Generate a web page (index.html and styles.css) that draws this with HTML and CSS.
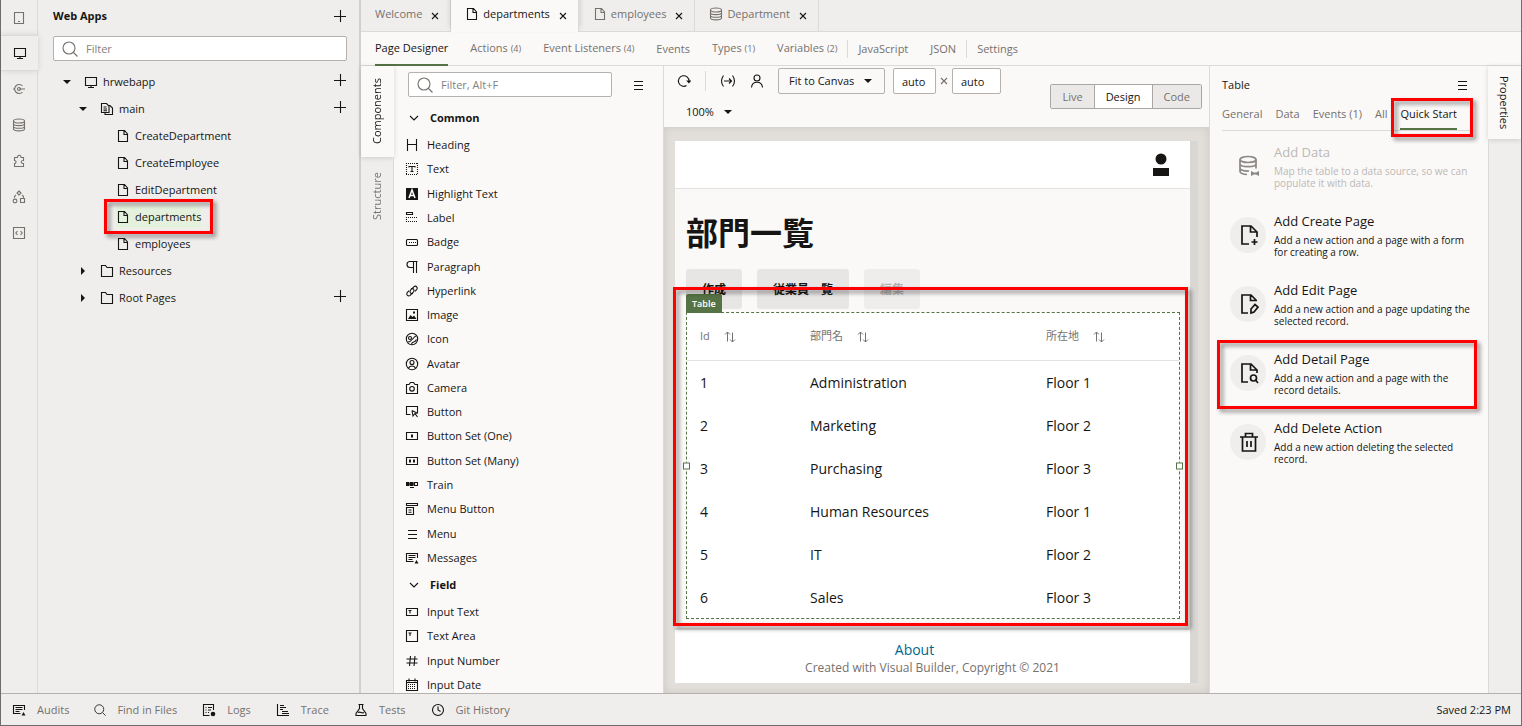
FILE: index.html
```html
<!DOCTYPE html>
<html lang="en">
<head>
<meta charset="utf-8">
<title>Visual Builder - departments</title>
<link rel="stylesheet" href="styles.css">
</head>
<body>
<svg class="sprite" aria-hidden="true">
  <symbol id="plus" viewBox="0 0 14 14"><path d="M7.500 1v12M1 7.500h12"/></symbol>
  <symbol id="search" viewBox="0 0 16 16"><circle cx="7" cy="7" r="6"/><path d="M11.500 11.500L15.500 15.500"/></symbol>
  <symbol id="mobile" viewBox="0 0 14 14"><path d="M2.500 1.500h9v11h-9zM6 10.500h2"/></symbol>
  <symbol id="desktop" viewBox="0 0 14 14"><path d="M1.500 2.500h11v8h-11zM7 10.500v2M4 12.500h6"/></symbol>
  <symbol id="service" viewBox="0 0 14 14"><path d="M10.500 4A4.500 4.500 0 1 0 10.500 10M1 7h2M7 7h6"/><circle cx="7" cy="7" r="1.500"/></symbol>
  <symbol id="data" viewBox="0 0 14 14"><ellipse cx="7" cy="3" rx="5.500" ry="2"/><path d="M1.500 3v8c0 2.500 11 2.500 11 0V3M1.500 5.700c0 2.500 11 2.500 11 0M1.500 8.400c0 2.500 11 2.500 11 0"/></symbol>
  <symbol id="puzzle" viewBox="0 0 14 14"><path d="M2.500 3.500h3c-.5-3 4-3 3.500 0h2.500v3c-3-.5-3 3.500 0 3v3h-9v-3c2 .3 2-3.300 0-3z"/></symbol>
  <symbol id="process" viewBox="0 0 14 14"><path d="M7 1l2 2-2 2-2-2zM8.500 8.500h4v4h-4zM4 5C2.500 6 2 7 2.500 8M10 5c1.500 1 2 2 1.500 3"/><circle cx="3" cy="11" r="1.900"/></symbol>
  <symbol id="code" viewBox="0 0 14 14"><path d="M1.500 1.500h11v11h-11zM5.500 5L3.800 7l1.700 2M8.500 5l1.700 2-1.700 2"/></symbol>
  <symbol id="page" viewBox="0 0 14 14"><path d="M2.500 1.500h6L11.500 5v7.500h-9zM8 1.500V5.500h3.500"/></symbol>
  <symbol id="flow" viewBox="0 0 14 14"><path d="M1.500 1.500h5L9 4v6.500H1.500zM9 3.500h1L12.500 6v6.500H5v-2M3.500 5h3M3.500 7h3.500M3.500 8.700h3.500"/></symbol>
  <symbol id="folder" viewBox="0 0 14 14"><path d="M1.500 1.500h4l1.500 2h5.500v9h-11z"/></symbol>
  <symbol id="down" viewBox="0 0 8 8"><path class="solid" d="M0 2h8L4 6z"/></symbol>
  <symbol id="right" viewBox="0 0 8 8"><path class="solid" d="M2 0v8l4-4z"/></symbol>
  <symbol id="close" viewBox="0 0 8 8"><path d="M1 1l6 6M7 1L1 7"/></symbol>
  <symbol id="menu" viewBox="0 0 14 14"><path d="M3 3.500h9M3 7.500h9M3 11.500h9"/></symbol>
  <symbol id="chevron" viewBox="0 0 10 10"><path d="M1 3l4 4 4-4"/></symbol>
  <symbol id="refresh" viewBox="0 0 14 14"><path d="M9.500 11.500A5.300 5.300 0 1 1 12 7"/><path class="solid" d="M9.200 6.500h5.300L11.900 9.600z"/></symbol>
  <symbol id="params" viewBox="0 0 16 14"><path d="M3.500 1.500Q-.500 7 3.500 12.500M12.500 1.500Q16.500 7 12.500 12.500M4 7h7.500M9 4.500L11.500 7 9 9.500"/></symbol>
  <symbol id="person" viewBox="0 0 14 14"><circle cx="7" cy="4" r="3"/><path d="M1.500 13.500C2 6.500 12 6.500 12.500 13.500"/></symbol>
  <symbol id="user" viewBox="0 0 18 24"><circle class="solid" cx="9" cy="6" r="5.500"/><path class="solid" d="M1 15h16v8H1z"/></symbol>
  <symbol id="sort" viewBox="0 0 12 12"><path d="M3.500 10.500V1M1 3.500L3.500 1 6 3.500M8.500 1.500V11M6 8.500L8.500 11 11 8.500"/></symbol>
  <symbol id="heading" viewBox="0 0 14 14"><path d="M2.500 1v12M11.500 1v12M2.500 6.500h9"/></symbol>
  <symbol id="text" viewBox="0 0 14 14"><path class="dots" d="M1 1.500h12M1 12.500h12M1.500 1v12M12.500 1v12"/><path d="M4 5.500V4.500h6v1M7 4v6M5.500 9.500h3"/></symbol>
  <symbol id="highlight" viewBox="0 0 14 14"><path class="solid" d="M1 1h12v12H1z"/><path class="light" d="M4 11l3-8 3 8M5 8.500h4"/></symbol>
  <symbol id="label" viewBox="0 0 14 14"><path d="M1.500 1.500h6v2h-6z"/><path class="dots" d="M1 6.500h12M1 10.500h12M1.500 6v5"/></symbol>
  <symbol id="badge" viewBox="0 0 14 14"><rect x="1.500" y="4.500" width="11" height="6" rx="1"/><path class="dots" d="M4 7.500h7"/></symbol>
  <symbol id="paragraph" viewBox="0 0 14 14"><path d="M12.500 1.500H5a3 3 0 0 0 0 6h3M8.500 1.500V13M11.500 1.500V13"/></symbol>
  <symbol id="link" viewBox="0 0 14 14"><path d="M8 9.500C6 10.500 4 8 5.500 6.200L8.800 2.800c2-1.700 4.500.7 3 2.600L10 7.400M6 4.700C8 3.500 10 6 8.500 7.900L5.200 11.300c-2 1.700-4.500-.7-3-2.600L4 6.700"/></symbol>
  <symbol id="image" viewBox="0 0 14 14"><path d="M1.500 1.500h11v11h-11z"/><path class="solid" d="M3 11l2.500-4 2 2L9 7.500l2.500 3.500zM8 3.500h2v2H8z"/></symbol>
  <symbol id="icon" viewBox="0 0 14 14"><circle cx="7" cy="7" r="5.700"/><circle cx="5" cy="6" r="1.500"/><path d="M3 10c4 0 5-5 8-6M6.500 12.500c0-4 4-1 5-5"/></symbol>
  <symbol id="avatar" viewBox="0 0 14 14"><circle cx="7" cy="7" r="5.700"/><circle cx="7" cy="5.500" r="2"/><path d="M3.500 11.300c1-3 6-3 7 0"/></symbol>
  <symbol id="camera" viewBox="0 0 14 14"><path d="M1.500 3.500H4L5.500 1.500h3L10 3.500h2.500v9h-11z"/><circle cx="7" cy="7.800" r="2.300"/></symbol>
  <symbol id="button" viewBox="0 0 14 14"><path d="M5.500 9.500h-4v-8h11v7M7 5.500l5 2.500-2 .5 2.500 3.500M7 5.500l1 5.500 1.500-2"/></symbol>
  <symbol id="one" viewBox="0 0 14 14"><path d="M1.500 3.500h11v7h-11z"/><path class="solid" d="M6 5.500h2v3H6z"/></symbol>
  <symbol id="many" viewBox="0 0 14 14"><path d="M1.500 3.500h11v7h-11z"/><path class="solid" d="M4 5.500h2v3H4zM8 5.500h2v3H8z"/></symbol>
  <symbol id="train" viewBox="0 0 14 14"><path class="solid" d="M1 4h3.500v4H1zM5 4h3.500v4H5zM4 5.500h6v1H4zM5 9h4v1H5z"/><path d="M9.500 4.500h3v3h-3z"/></symbol>
  <symbol id="menubutton" viewBox="0 0 14 14"><path d="M1.500 1.500h11v2h-11zM1.500 5.500h7v7h-7zM3.500 8h3M3.500 10.300h3"/></symbol>
  <symbol id="messages" viewBox="0 0 14 14"><path d="M12.500 7V2.500h-11v8h7M3.500 4.500h7M3.500 6.500h7M3.500 8.500h4"/><path class="solid" d="M11.500 9l2 3.500H9.500z"/></symbol>
  <symbol id="inputtext" viewBox="0 0 14 14"><path d="M1.500 3.500h11v7h-11zM3.500 5.500h3M5 5.500v3"/></symbol>
  <symbol id="textarea" viewBox="0 0 14 14"><path d="M1.500 1.500h11v11h-11zM3.500 4h3M5 4v3"/></symbol>
  <symbol id="number" viewBox="0 0 14 14"><path d="M5.500 2l-1 10M10 2L9 12M1.500 5h11M1.500 9h11"/></symbol>
  <symbol id="calendar" viewBox="0 0 14 14"><path d="M1.500 2.500h11v10h-11zM1.500 4.500h11M4 .500v3M10 .500v3"/><path class="dots" d="M3 6.500h8M3 8.500h8M3 10.500h8"/></symbol>
  <symbol id="logs" viewBox="0 0 14 14"><path d="M7.500 12.500h-6v-11h10V7M3.500 4.500h1M6 4.500h4M3.500 7h1M6 7h3M3.500 9.500h1M6 9.500h1"/><circle class="solid" cx="11" cy="11" r="2.300"/></symbol>
  <symbol id="trace" viewBox="0 0 14 14"><path d="M1.500 1v11.500H13M4 2.500h4M4 4.500h6M4 6.500h3M6 8.500h6M6 10.500h7"/></symbol>
  <symbol id="tests" viewBox="0 0 14 14"><path d="M4.500 1.500h5M5.500 1.500v4L2 10.500v2h10v-2L8.500 5.500v-4M4 9.500c2-1.500 4 1.500 6 0"/></symbol>
  <symbol id="clock" viewBox="0 0 14 14"><circle cx="7" cy="7" r="5.500"/><path d="M7 3.500V7l2.500 1.500"/></symbol>
  <symbol id="adddata" viewBox="0 0 22 22"><ellipse cx="10" cy="4.500" rx="8" ry="3"/><path d="M2 4.500v12c0 1.500 3 3 7 3M18 4.500v9M2 9c0 3.500 16 3.500 16 0M2 13c0 2.500 5 3.200 9 3"/><path class="solid" d="M13 16l3 1.500h2l3-1.500v5l-3-1.500h-2L13 21z"/></symbol>
  <symbol id="addpage" viewBox="0 0 22 22"><path d="M11 20H4V2h9l6 6v5M12.500 2v6H19M13.500 18h6M16.500 15v6"/></symbol>
  <symbol id="editpage" viewBox="0 0 22 22"><path d="M10 20H4V2h9l5 5M12.500 2v5.500H19M13 16l4-4.500 3 2.500-4 5-3 1z"/></symbol>
  <symbol id="detailpage" viewBox="0 0 22 22"><path d="M10 20H4V2h9l6 6v3M12.500 2v6H19M17.500 18L20 21"/><circle cx="15.500" cy="16" r="3"/></symbol>
  <symbol id="trash" viewBox="0 0 22 22"><path d="M2 6h18M7.500 6V2.500h7V6M4.500 6v14h13V6M9 10v6M13 10v6"/></symbol>
</svg>

<div class="app">
  <div class="workspace">
    <nav class="rail" aria-label="Artifacts">
      <button class="rail-item" aria-label="Mobile Apps"><svg class="i14"><use href="#mobile"/></svg></button>
      <button class="rail-item current" aria-label="Web Apps"><svg class="i14"><use href="#desktop"/></svg></button>
      <button class="rail-item" aria-label="Services"><svg class="i14"><use href="#service"/></svg></button>
      <button class="rail-item" aria-label="Business Objects"><svg class="i14"><use href="#data"/></svg></button>
      <button class="rail-item" aria-label="Components"><svg class="i14"><use href="#puzzle"/></svg></button>
      <button class="rail-item" aria-label="Processes"><svg class="i14"><use href="#process"/></svg></button>
      <button class="rail-item" aria-label="Source"><svg class="i14"><use href="#code"/></svg></button>
    </nav>

    <aside class="navigator">
      <header class="nav-head"><h2>Web Apps</h2><button class="add" aria-label="Add web app"><svg class="i14"><use href="#plus"/></svg></button></header>
      <label class="filter"><svg class="i16"><use href="#search"/></svg><input type="text" placeholder="Filter" aria-label="Filter"></label>
      <ul class="tree">
        <li class="l1"><svg class="i8"><use href="#down"/></svg><svg class="i14"><use href="#desktop"/></svg><span>hrwebapp</span><button class="add" aria-label="Add to hrwebapp"><svg class="i14"><use href="#plus"/></svg></button></li>
        <li class="l2"><svg class="i8"><use href="#down"/></svg><svg class="i14"><use href="#flow"/></svg><span>main</span><button class="add" aria-label="Add to main"><svg class="i14"><use href="#plus"/></svg></button></li>
        <li class="l3"><svg class="i14"><use href="#page"/></svg><span>CreateDepartment</span></li>
        <li class="l3"><svg class="i14"><use href="#page"/></svg><span>CreateEmployee</span></li>
        <li class="l3"><svg class="i14"><use href="#page"/></svg><span>EditDepartment</span></li>
        <li class="l3 selected"><div class="node marked"><svg class="i14"><use href="#page"/></svg><span>departments</span></div></li>
        <li class="l3"><svg class="i14"><use href="#page"/></svg><span>employees</span></li>
        <li class="l2"><svg class="i8"><use href="#right"/></svg><svg class="i14"><use href="#folder"/></svg><span>Resources</span></li>
        <li class="l2"><svg class="i8"><use href="#right"/></svg><svg class="i14"><use href="#folder"/></svg><span>Root Pages</span><button class="add" aria-label="Add root page"><svg class="i14"><use href="#plus"/></svg></button></li>
      </ul>
    </aside>

    <main class="editor">
      <div class="doc-tabs">
        <div class="doc-tab"><span>Welcome</span><button class="close" aria-label="Close Welcome"><svg class="i8"><use href="#close"/></svg></button></div>
        <div class="doc-tab current"><svg class="i14"><use href="#page"/></svg><span>departments</span><button class="close" aria-label="Close departments"><svg class="i8"><use href="#close"/></svg></button></div>
        <div class="doc-tab"><svg class="i14"><use href="#page"/></svg><span>employees</span><button class="close" aria-label="Close employees"><svg class="i8"><use href="#close"/></svg></button></div>
        <div class="doc-tab"><svg class="i14"><use href="#data"/></svg><span>Department</span><button class="close" aria-label="Close Department"><svg class="i8"><use href="#close"/></svg></button></div>
      </div>
      <nav class="views">
        <a class="current" href="#">Page Designer</a>
        <a href="#">Actions <small>(4)</small></a>
        <a href="#">Event Listeners <small>(4)</small></a>
        <a href="#">Events</a>
        <a href="#">Types <small>(1)</small></a>
        <a href="#">Variables <small>(2)</small></a>
        <a class="ruled" href="#">JavaScript</a>
        <a href="#">JSON</a>
        <a class="ruled" href="#">Settings</a>
      </nav>

      <div class="designer">
        <div class="side-tabs">
          <button class="current">Components</button>
          <button>Structure</button>
        </div>

        <section class="palette">
          <div class="palette-head">
            <label class="filter"><svg class="i16"><use href="#search"/></svg><input type="text" placeholder="Filter, Alt+F" aria-label="Filter components"></label>
            <button class="plain" aria-label="Palette menu"><svg class="i14"><use href="#menu"/></svg></button>
          </div>
          <h3><svg class="i10"><use href="#chevron"/></svg>Common</h3>
          <ul class="components common">
            <li><svg class="i14"><use href="#heading"/></svg>Heading</li>
            <li><svg class="i14"><use href="#text"/></svg>Text</li>
            <li><svg class="i14"><use href="#highlight"/></svg>Highlight Text</li>
            <li><svg class="i14"><use href="#label"/></svg>Label</li>
            <li><svg class="i14"><use href="#badge"/></svg>Badge</li>
            <li><svg class="i14"><use href="#paragraph"/></svg>Paragraph</li>
            <li><svg class="i14"><use href="#link"/></svg>Hyperlink</li>
            <li><svg class="i14"><use href="#image"/></svg>Image</li>
            <li><svg class="i14"><use href="#icon"/></svg>Icon</li>
            <li><svg class="i14"><use href="#avatar"/></svg>Avatar</li>
            <li><svg class="i14"><use href="#camera"/></svg>Camera</li>
            <li><svg class="i14"><use href="#button"/></svg>Button</li>
            <li><svg class="i14"><use href="#one"/></svg>Button Set (One)</li>
            <li><svg class="i14"><use href="#many"/></svg>Button Set (Many)</li>
            <li><svg class="i14"><use href="#train"/></svg>Train</li>
            <li><svg class="i14"><use href="#menubutton"/></svg>Menu Button</li>
            <li><svg class="i14"><use href="#menu"/></svg>Menu</li>
            <li><svg class="i14"><use href="#messages"/></svg>Messages</li>
          </ul>
          <h3><svg class="i10"><use href="#chevron"/></svg>Field</h3>
          <ul class="components">
            <li><svg class="i14"><use href="#inputtext"/></svg>Input Text</li>
            <li><svg class="i14"><use href="#textarea"/></svg>Text Area</li>
            <li><svg class="i14"><use href="#number"/></svg>Input Number</li>
            <li><svg class="i14"><use href="#calendar"/></svg>Input Date</li>
          </ul>
        </section>

        <section class="stage">
          <div class="toolbar">
            <div class="tools">
              <div class="tool-row">
                <button class="plain" aria-label="Reload"><svg class="i14"><use href="#refresh"/></svg></button>
                <span class="divider"></span>
                <button class="plain" aria-label="Parameters"><svg class="i16"><use href="#params"/></svg></button>
                <button class="plain" aria-label="Authentication"><svg class="i14"><use href="#person"/></svg></button>
                <span class="picker boxed"><select aria-label="Canvas size"><option>Fit to Canvas</option></select><svg class="i8"><use href="#down"/></svg></span>
                <span class="dims"><input class="width" type="text" value="auto" aria-label="Width"><svg class="i8"><use href="#close"/></svg><input class="height" type="text" value="auto" aria-label="Height"></span>
              </div>
              <span class="picker zoom"><select aria-label="Zoom"><option>100%</option></select><svg class="i8"><use href="#down"/></svg></span>
            </div>
            <div class="modes"><button>Live</button><button class="current">Design</button><button>Code</button></div>
          </div>

          <div class="canvas">
            <div class="preview" lang="ja">
              <header class="app-bar"><svg class="avatar"><use href="#user"/></svg></header>
              <div class="app-body">
                <h1>部門一覧</h1>
                <div class="actions"><button>作成</button><button>従業員一覧</button><button disabled>編集</button></div>
                <div class="table-box marked">
                  <span class="tag">Table</span>
                  <table>
                    <colgroup><col class="c-id"><col class="c-name"><col></colgroup>
                    <thead><tr><th>Id<svg class="i12"><use href="#sort"/></svg></th><th>部門名<svg class="i12"><use href="#sort"/></svg></th><th>所在地<svg class="i12"><use href="#sort"/></svg></th></tr></thead>
                    <tbody>
                      <tr><td>1</td><td>Administration</td><td>Floor 1</td></tr>
                      <tr><td>2</td><td>Marketing</td><td>Floor 2</td></tr>
                      <tr><td>3</td><td>Purchasing</td><td>Floor 3</td></tr>
                      <tr><td>4</td><td>Human Resources</td><td>Floor 1</td></tr>
                      <tr><td>5</td><td>IT</td><td>Floor 2</td></tr>
                      <tr><td>6</td><td>Sales</td><td>Floor 3</td></tr>
                    </tbody>
                  </table>
                  <i class="handle west"></i><i class="handle east"></i>
                </div>
              </div>
              <footer class="app-foot"><a href="#">About</a><p>Created with Visual Builder, Copyright © 2021</p></footer>
            </div>
          </div>
        </section>

        <aside class="properties">
          <header class="prop-head"><h2>Table</h2><button class="plain" aria-label="Properties menu"><svg class="i14"><use href="#menu"/></svg></button></header>
          <nav class="prop-tabs"><a href="#">General</a><a href="#">Data</a><a href="#">Events (1)</a><a href="#">All</a><a class="current marked" href="#">Quick Start</a></nav>
          <div class="starts">
            <button class="start" disabled><span class="disc"><svg><use href="#adddata"/></svg></span><span class="copy"><b>Add Data</b><span>Map the table to a data source, so we can populate it with data.</span></span></button>
            <button class="start"><span class="disc"><svg><use href="#addpage"/></svg></span><span class="copy"><b>Add Create Page</b><span>Add a new action and a page with a form for creating a row.</span></span></button>
            <button class="start"><span class="disc"><svg><use href="#editpage"/></svg></span><span class="copy"><b>Add Edit Page</b><span>Add a new action and a page updating the selected record.</span></span></button>
            <button class="start marked"><span class="disc"><svg><use href="#detailpage"/></svg></span><span class="copy"><b>Add Detail Page</b><span>Add a new action and a page with the record details.</span></span></button>
            <button class="start"><span class="disc"><svg><use href="#trash"/></svg></span><span class="copy"><b>Add Delete Action</b><span>Add a new action deleting the selected record.</span></span></button>
          </div>
        </aside>
        <div class="side-tabs right"><button class="current">Properties</button></div>
      </div>
    </main>
  </div>

  <footer class="status">
    <button><svg class="i14"><use href="#messages"/></svg>Audits</button>
    <button><svg class="i12"><use href="#search"/></svg>Find in Files</button>
    <button><svg class="i14"><use href="#logs"/></svg>Logs</button>
    <button><svg class="i14"><use href="#trace"/></svg>Trace</button>
    <button><svg class="i14"><use href="#tests"/></svg>Tests</button>
    <button><svg class="i14"><use href="#clock"/></svg>Git History</button>
    <span class="saved">Saved 2:23 PM</span>
  </footer>
</div>
</body>
</html>
```

FILE: styles.css
```css
:root {
  --ink: #161513;
  --muted: #75716d;
  --ground: #f0eeec;
  --paper: #fbf9f8;
  --line: #dcdad8;
  --edge: #b4b1ae;
  --green: #557344;
}

* { box-sizing: border-box; }

body {
  margin: 0;
  background: var(--ground);
  color: var(--ink);
  font: 11px/16px "Open Sans", "Noto Sans CJK JP", sans-serif;
}

h1, h2, h3, p, ul { margin: 0; padding: 0; }
ul { list-style: none; }
a { color: inherit; text-decoration: none; }

button, input, select {
  margin: 0;
  padding: 0;
  border: 0;
  background: none;
  color: inherit;
  font: inherit;
}

input { min-width: 0; outline: 0; }
input::placeholder { color: #85817d; opacity: 1; }
select { appearance: none; }

svg {
  flex: none;
  fill: none;
  stroke: currentColor;
  stroke-width: 1.1;
}

.sprite { display: none; }
.solid { fill: currentColor; stroke: none; }
.light { stroke: #fff; stroke-width: 1.5; }
.dots { stroke-dasharray: 1 1; }
.i8 { width: 8px; height: 8px; }
.i10 { width: 10px; height: 10px; }
.i12 { width: 12px; height: 12px; }
.i14 { width: 14px; height: 14px; }
.i16 { width: 16px; height: 16px; }

.app {
  display: flex;
  flex-direction: column;
  height: 100vh;
  border: 1px solid #6f6d6b;
  border-top: 0;
}

.workspace { display: flex; flex: 1; min-height: 0; }

/* Red callout frame */
.marked { position: relative; }
.marked::after {
  content: "";
  position: absolute;
  z-index: 2;
  border: 3px solid #f00;
  filter: drop-shadow(3px 3px 2px rgba(0, 0, 0, .45));
  pointer-events: none;
}

/* Artifact rail */
.rail {
  display: flex;
  flex-direction: column;
  width: 37px;
  border-right: 1px solid var(--line);
}

.rail-item {
  display: grid;
  place-items: center;
  height: 36px;
  color: var(--muted);
}

.rail-item:first-child { height: 35px; }

.rail-item.current {
  margin-right: -1px;
  border: solid var(--line);
  border-width: 1px 0;
  background: var(--ground);
  box-shadow: 0 0 6px rgba(0, 0, 0, .12);
  color: var(--ink);
}

/* Navigator */
.navigator {
  width: 323px;
  padding: 0 12px 0 15px;
  border-right: 2px solid #d2d0ce;
}

.nav-head {
  display: flex;
  align-items: center;
  justify-content: space-between;
  height: 32px;
  padding-bottom: 1px;
}

.nav-head h2 { font-size: 11px; }
.add { display: flex; }

.filter {
  display: flex;
  align-items: center;
  gap: 8px;
  height: 25px;
  padding: 0 8px;
  border: 1px solid var(--edge);
  border-radius: 2px;
  background: #fff;
  color: var(--muted);
}

.navigator .filter { margin: 4px 0 7px; }
.filter input { flex: 1; }

.tree li {
  display: flex;
  align-items: center;
  height: 27px;
}

.tree .add { margin-left: auto; padding-bottom: 4px; }
.tree span { margin-left: 5px; }
.l1 { padding-left: 10px; }
.l2 { padding-left: 26px; }
.l3 { padding-left: 63px; }
.tree .i8 + .i14 { margin-left: 13px; }

.node {
  display: flex;
  align-items: center;
  height: 23px;
  background: #e4f1dc;
}

.node::after { inset: -6px -12px -6px -12px; }

/* Documents */
.editor {
  display: flex;
  flex: 1;
  flex-direction: column;
  min-width: 0;
  background: var(--paper);
}

.doc-tabs {
  display: flex;
  height: 32px;
  background: var(--ground);
  border-bottom: 1px solid var(--line);
}

.doc-tab {
  display: flex;
  align-items: center;
  height: 31px;
  padding: 0 11px 3px 14px;
  border-right: 1px solid var(--line);
  color: var(--muted);
}

.doc-tab.current {
  height: 32px;
  padding-bottom: 4px;
  background: var(--paper);
  box-shadow: 0 -4px 6px rgba(0, 0, 0, .18);
  color: var(--ink);
}

.doc-tab .i14 { margin-right: 4px; }
.close { display: flex; margin: 3px 0 0 9px; color: var(--ink); }

.views {
  display: flex;
  align-items: center;
  gap: 22px;
  height: 34px;
  padding-left: 14px;
  border-bottom: 1px solid var(--line);
  color: var(--muted);
}

.views small { font-size: 9px; }
.views a { padding: 8px 0; }
.views .current { border-bottom: 2px solid var(--green); color: var(--ink); }
.views .ruled { margin-left: -12px; padding: 1px 0 1px 10px; border-left: 1px solid var(--line); }

.designer { display: flex; flex: 1; min-height: 0; }

/* Vertical tabs */
.side-tabs {
  display: flex;
  flex-direction: column;
  width: 33px;
  background: var(--ground);
}

.side-tabs button {
  display: flex;
  align-items: center;
  justify-content: center;
  height: 78px;
  border-left: 1px solid var(--line);
  color: var(--muted);
  writing-mode: vertical-rl;
  transform: rotate(180deg);
}

.side-tabs .current {
  height: 91px;
  border-color: transparent;
  background: var(--paper);
  box-shadow: 0 -1px 5px rgba(0, 0, 0, .15);
  color: var(--ink);
}

.side-tabs::after { content: ""; flex: 1; border-right: 1px solid var(--line); }
.side-tabs.right button { height: 73px; padding-right: 2px; transform: none; box-shadow: 0 1px 5px rgba(0, 0, 0, .15); }
.side-tabs.right::after { border-right: 0; border-left: 1px solid var(--line); }

/* Palette */
.palette {
  width: 270px;
  padding: 6px 0 0 14px;
  border-right: 1px solid var(--line);
  overflow: hidden;
}

.palette-head { display: flex; align-items: center; gap: 19px; margin-bottom: 6px; }
.palette-head .filter { width: 204px; }
.plain { display: flex; }

.palette h3 {
  display: flex;
  align-items: center;
  gap: 11px;
  height: 30px;
  padding-left: 1px;
  font-size: 11px;
}

.components {
  display: grid;
  grid-auto-rows: 1fr;
  margin-left: -3px;
  min-height: 97px;
}

.components.common { min-height: 437px; }
.components li { display: flex; align-items: center; gap: 8px; }

/* Stage */
.stage { display: flex; flex: 1; flex-direction: column; min-width: 0; }

.toolbar {
  display: flex;
  align-items: center;
  justify-content: space-between;
  height: 61px;
  padding: 0 7px 0 13px;
}

.tools {
  display: flex;
  flex-direction: column;
  align-items: flex-start;
  align-self: flex-start;
  gap: 9px;
  padding-top: 2px;
}

.tool-row { display: flex; align-items: center; gap: 14px; }
.divider { width: 1px; height: 20px; background: var(--line); }

.picker { display: grid; align-items: center; height: 26px; }
.picker select, .picker svg { grid-area: 1 / 1; }
.picker svg { justify-self: end; pointer-events: none; }
.boxed { border: 1px solid var(--edge); border-radius: 2px; padding: 0 12px 0 10px; width: 107px; }
.zoom { width: 46px; height: 18px; margin-left: 9px; }

.dims { display: flex; align-items: center; gap: 4px; margin-left: -6px; color: var(--muted); }
.dims input {
  height: 26px;
  padding: 0 8px;
  border: 1px solid var(--edge);
  border-radius: 2px;
  background: #fff;
  color: var(--ink);
}
.dims .width { width: 43px; }
.dims .height { width: 49px; }

.modes { display: flex; border: 1px solid #a9a6a3; border-radius: 2px; }
.modes button { height: 23px; padding: 0 11px; background: #ebe9e7; color: var(--muted); }
.modes button + button { border-left: 1px solid #a9a6a3; }
.modes .current { background: #fff; color: var(--ink); }

.canvas {
  display: flex;
  flex: 1;
  min-height: 0;
  padding: 14px 11px 10px;
  background: #e2dfda;
  box-shadow: inset 0 0 8px rgba(0, 0, 0, .1);
}

.preview {
  display: flex;
  flex: 1;
  flex-direction: column;
  min-width: 0;
  border-right: 8px solid #d9d7d3;
  background: var(--paper);
  font-size: 14px;
}

.app-bar {
  display: flex;
  justify-content: flex-end;
  align-items: center;
  height: 48px;
  padding-right: 20px;
  border-bottom: 1px solid #e4e2e0;
  background: #fff;
}

.avatar { width: 18px; height: 24px; }
.app-body { padding: 18px 10px 0 11px; }
.app-body h1 { font: bold 32px/48px "Noto Sans CJK JP", sans-serif; }
.actions { display: flex; gap: 15px; margin-top: 14px; }

.actions button {
  height: 40px;
  padding: 0 16px;
  border-radius: 3px;
  background: #e8e6e4;
  font: bold 12px/18px "Noto Sans CJK JP", sans-serif;
}

.actions button:disabled { background: #efedec; color: #b3b1af; }

.table-box {
  margin-top: 3px;
  border: 1px dashed var(--green);
  background: #fff;
}

.table-box::after { inset: -26px -9px -8px -14px; }

.tag {
  position: absolute;
  bottom: 100%;
  left: -1px;
  z-index: 1;
  padding: 2px 6px 1px;
  border-radius: 2px 2px 0 0;
  background: var(--green);
  color: #fff;
  font-size: 9px;
  font-weight: 600;
}

table { width: 100%; border-collapse: collapse; table-layout: fixed; }
.c-id { width: 110px; }
.c-name { width: 236px; }
th, td { height: 43px; padding: 0 13px; text-align: left; line-height: 20px; }
td { padding-top: 3px; }
th {
  height: 47px;
  border-bottom: 1px solid #e4e2e0;
  color: var(--muted);
  font-size: 11px;
  font-weight: 400;
}
th svg { margin-left: 14px; vertical-align: middle; stroke-width: 1; }

.handle {
  position: absolute;
  top: 50%;
  width: 7px;
  height: 7px;
  border: 1px solid var(--green);
  background: #fff;
  transform: translateY(-50%);
}

.west { left: -4px; }
.east { right: -4px; }

.app-foot {
  margin-top: auto;
  padding: 10px 0 7px;
  border-top: 2px solid #e4e2e0;
  background: #fff;
  color: var(--muted);
  font-size: 12px;
  line-height: 16px;
  text-align: center;
}

.app-foot a { display: block; padding-right: 36px; color: #00688c; font-size: 14px; line-height: 20px; }

/* Properties */
.properties {
  width: 279px;
  padding: 11px 14px 0 12px;
  border-left: 1px solid var(--line);
}

.prop-head { display: flex; align-items: center; justify-content: space-between; padding-right: 5px; }
.prop-head h2 { font-size: 11px; font-weight: 400; }

.prop-tabs {
  display: flex;
  gap: 13px;
  margin-top: 12px;
  border-bottom: 1px solid var(--line);
  color: var(--muted);
}

.prop-tabs a { padding: 1px 0 6px; white-space: nowrap; }
.prop-tabs .current { border-bottom: 2px solid var(--green); color: var(--ink); }
.prop-tabs .current::after { inset: -7px -16px -9px -9px; }

.starts { display: flex; flex-direction: column; }

.start {
  display: flex;
  align-items: center;
  gap: 8px;
  height: 69px;
  padding: 0 0 0 8px;
  text-align: left;
}

.disc { display: grid; place-items: center; width: 36px; height: 36px; border-radius: 50%; background: var(--ground); }
.disc svg { width: 22px; height: 22px; margin-left: 2px; stroke-width: 1.7; }
.copy { display: grid; flex: 1; gap: 4px; font-size: 10px; line-height: 12px; }
.copy b { font-size: 13px; font-weight: 400; line-height: 18px; }
.start:disabled { color: #bbb8b5; }
.start:disabled .disc { background: none; color: #8b8885; }
.start.marked::after { inset: 2px -3px -2px -5px; }

/* Status bar */
.status {
  display: flex;
  align-items: center;
  gap: 25px;
  height: 32px;
  padding: 0 10px 0 11px;
  border-top: 1px solid var(--edge);
  color: var(--muted);
}

.status button { display: flex; align-items: center; gap: 11px; }
.status svg { color: var(--ink); }
.saved { margin-left: auto; color: var(--ink); }
```
